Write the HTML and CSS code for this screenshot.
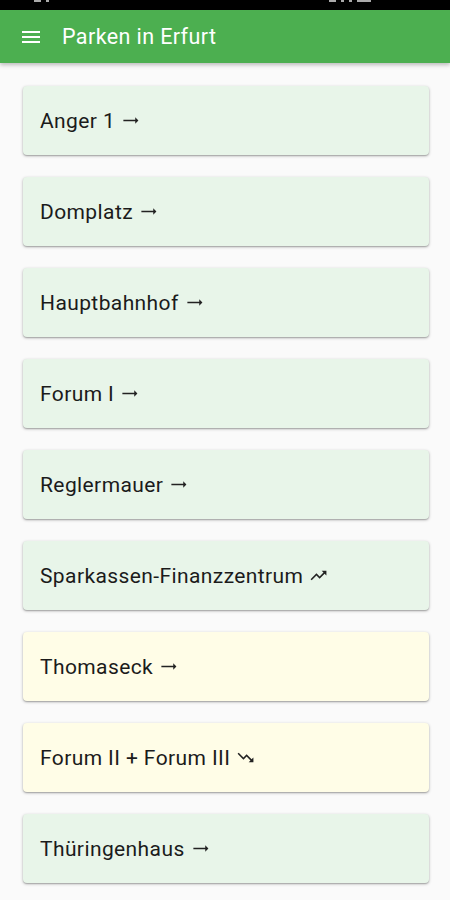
FILE: index.html
```html
<!DOCTYPE html>
<html lang="de">
<head>
  <meta charset="UTF-8" />
  <title>Parken in Erfurt</title>
  <link rel="stylesheet" href="styles.css">
</head>
<body>

  <div class="statusbar">
    <div class="status-left"><span class="dot"></span><span class="dot small"></span></div>
    <div class="status-right"><span class="dot"></span><span class="dot small"></span><span class="dot small"></span><span class="dot wide"></span></div>
  </div>

  <header class="appbar">
    <svg class="menu" width="24" height="24" viewBox="0 0 24 24"><path d="M3 18h18v-2H3v2zm0-5h18v-2H3v2zm0-7v2h18V6H3z" fill="#fff"/></svg>
    <h1>Parken in Erfurt</h1>
  </header>

  <main class="list">
    <div class="card green">Anger 1 <svg class="trend" viewBox="0 0 24 24"><path d="M22 12l-4-4v3H3v2h15v3z"/></svg></div>
    <div class="card green">Domplatz <svg class="trend" viewBox="0 0 24 24"><path d="M22 12l-4-4v3H3v2h15v3z"/></svg></div>
    <div class="card green">Hauptbahnhof <svg class="trend" viewBox="0 0 24 24"><path d="M22 12l-4-4v3H3v2h15v3z"/></svg></div>
    <div class="card green">Forum I <svg class="trend" viewBox="0 0 24 24"><path d="M22 12l-4-4v3H3v2h15v3z"/></svg></div>
    <div class="card green">Reglermauer <svg class="trend" viewBox="0 0 24 24"><path d="M22 12l-4-4v3H3v2h15v3z"/></svg></div>
    <div class="card green">Sparkassen-Finanzzentrum <svg class="trend" viewBox="0 0 24 24"><path d="M16 6l2.29 2.29-4.88 4.88-4-4L2 16.59 3.41 18l6-6 4 4 6.3-6.29L22 12V6z"/></svg></div>
    <div class="card yellow">Thomaseck <svg class="trend" viewBox="0 0 24 24"><path d="M22 12l-4-4v3H3v2h15v3z"/></svg></div>
    <div class="card yellow">Forum II + Forum III <svg class="trend" viewBox="0 0 24 24"><path d="M16 18l2.29-2.29-4.88-4.88-4 4L2 7.41 3.41 6l6 6 4-4 6.3 6.29L22 12v6z"/></svg></div>
    <div class="card green">Thüringenhaus <svg class="trend" viewBox="0 0 24 24"><path d="M22 12l-4-4v3H3v2h15v3z"/></svg></div>
  </main>

</body>
</html>
```

FILE: styles.css
```css
body {
  margin: 0;
  font-family: Roboto, "Noto Sans", sans-serif;
  background: #fafafa;
  color: #212121;
}

.statusbar {
  height: 10px;
  background: #000;
  display: flex;
  justify-content: space-between;
  align-items: flex-start;
  padding: 0 34px;
  overflow: hidden;
}

.status-left,
.status-right {
  display: flex;
  gap: 5px;
}

.status-right {
  margin-right: 45px;
}

.dot {
  width: 7px;
  height: 2px;
  background: #aaa;
}

.dot.small {
  width: 3px;
}

.dot.wide {
  width: 14px;
}

.appbar {
  height: 53px;
  background: #4caf50;
  display: flex;
  align-items: center;
  padding-left: 19px;
  box-shadow: 0 2px 4px rgba(0, 0, 0, 0.25);
  position: relative;
}

.menu {
  width: 24px;
  height: 24px;
}

.appbar h1 {
  margin: 0 0 0 19px;
  font-size: 21.5px;
  font-weight: 400;
  color: #fff;
  letter-spacing: 0.4px;
}

.list {
  display: flex;
  flex-direction: column;
  gap: 22px;
  padding: 23px 21px 20px 23px;
}

.card {
  height: 69px;
  display: flex;
  align-items: center;
  padding-left: 17px;
  border-radius: 4px;
  font-size: 21px;
  letter-spacing: 0.4px;
  color: #1b1b1b;
  box-shadow: 0 1px 3px rgba(0, 0, 0, 0.3), 0 1px 1px rgba(0, 0, 0, 0.14);
}

.card.green {
  background: #e8f5e9;
}

.card.yellow {
  background: #fffde7;
}

.trend {
  width: 19px;
  height: 19px;
  margin-left: 6px;
  fill: #222;
}
```
